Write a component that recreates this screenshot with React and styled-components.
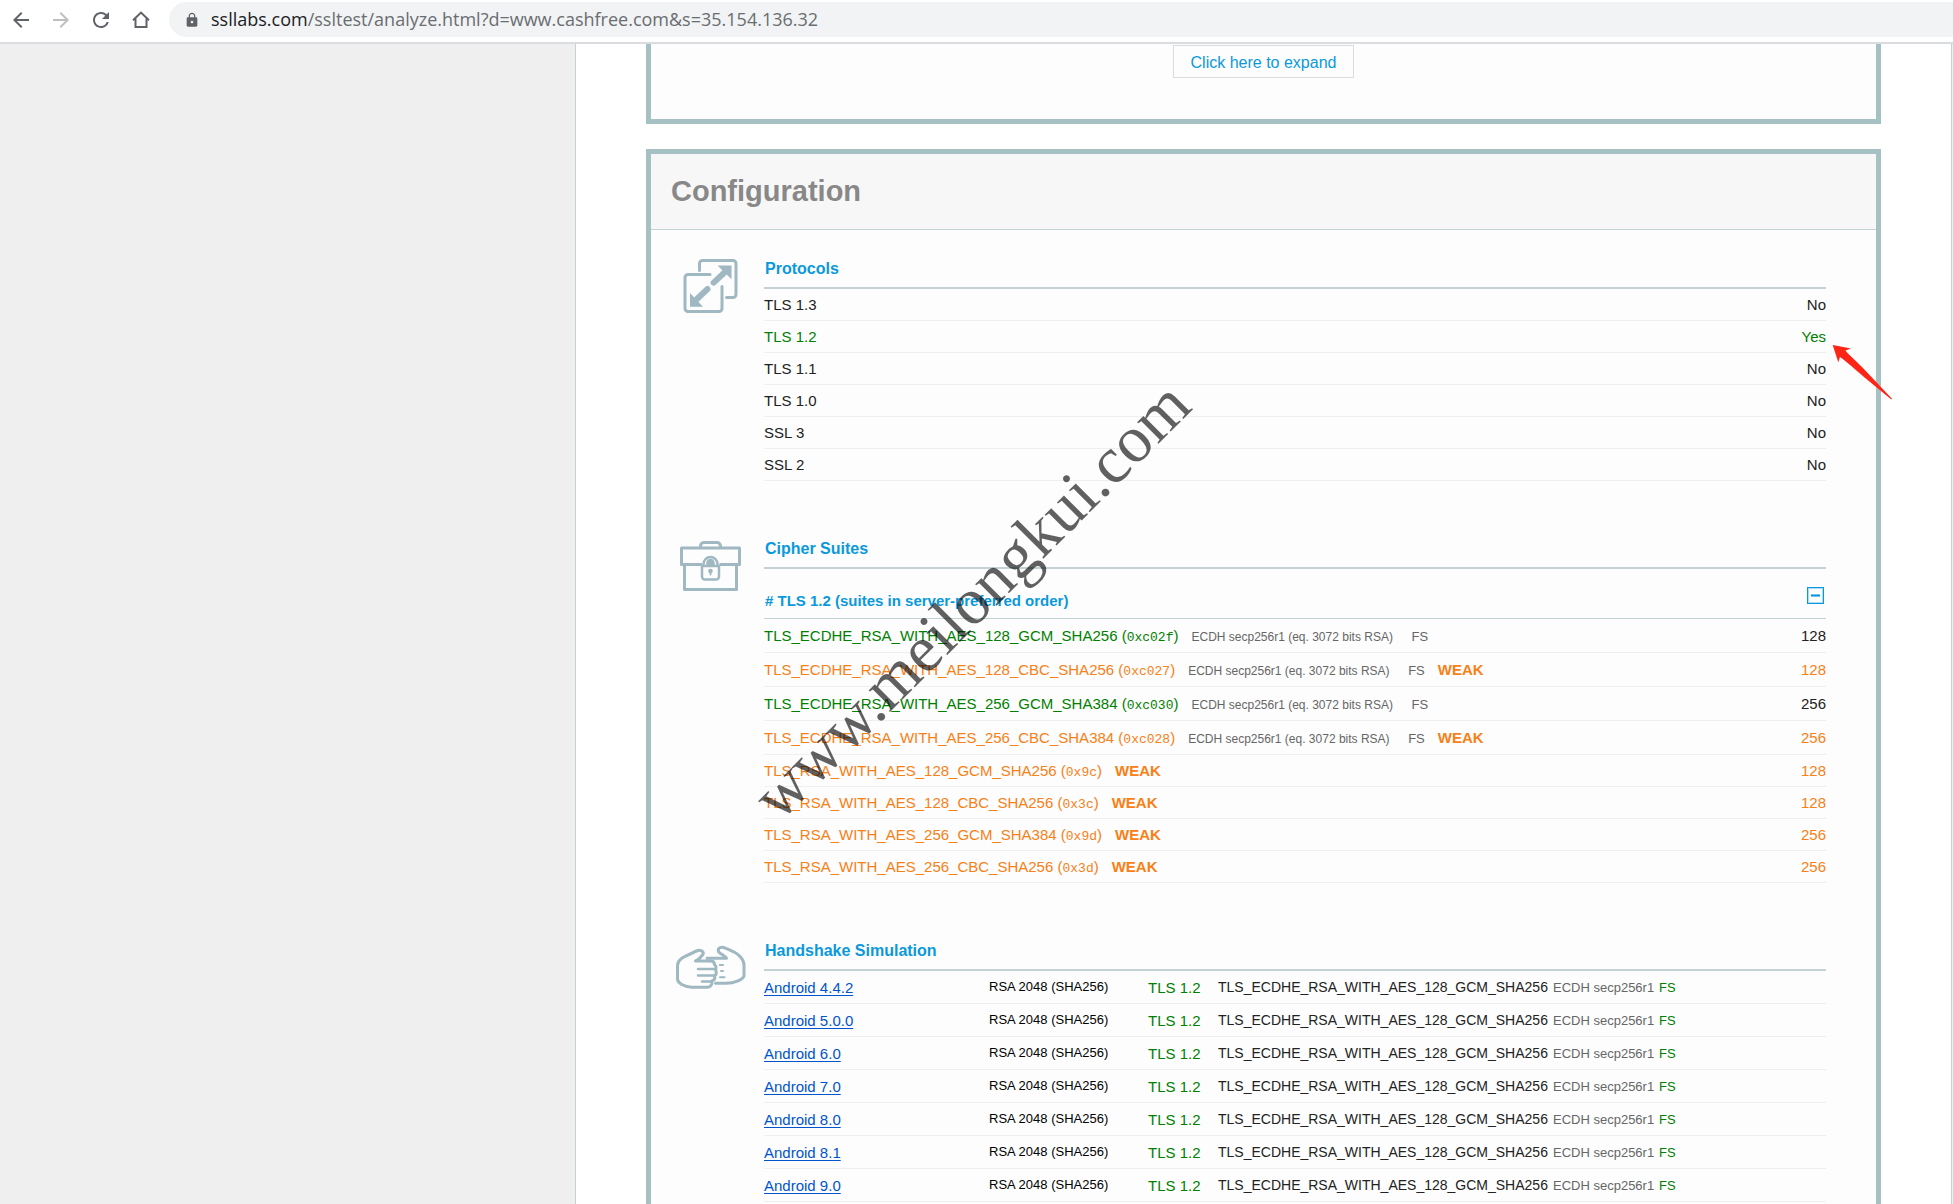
import styled, { createGlobalStyle } from "styled-components";
import { MdArrowBack, MdArrowForward, MdRefresh, MdLock } from "react-icons/md";

const GlobalStyle = createGlobalStyle`
    * {
        box-sizing : border-box;
    }
    body {
        margin : 0;
        background : #efefef;
        color : #222222;
        font-family : "Liberation Sans", Arial, sans-serif;
        font-size : 15px;
    }
`
const StyledPage = styled.div`
    position : relative;
    display : flex;
    flex-direction : column;
    height : 100vh;
    overflow : hidden;
`
const StyledToolbar = styled.header`
    display : flex;
    flex-shrink : 0;
    align-items : flex-start;
    height : 44px;
    padding : 2px 0 0 9px;
    gap : 16px;
    background : white;
    border-bottom : 2px solid #dadce0;
`
const StyledNavButton = styled.button`
    display : flex;
    align-items : center;
    justify-content : center;
    width : 24px;
    height : 35px;
    padding : 0;
    border : none;
    background : none;
    color : ${(props) => (props.disabled ? "#bdbfc1" : "#5f6368")};
`
const StyledAddress = styled.div`
    display : flex;
    flex : 1;
    align-items : center;
    gap : 11px;
    height : 35px;
    padding-left : 15px;
    border-radius : 18px 0 0 18px;
    background : #f1f3f4;
    color : #5f6368;
    font-family : "Open Sans", "Noto Sans", sans-serif;
    font-size : 18px;
`
const StyledUrl = styled.span`
    padding-bottom : 2px;
    color : #6a6d71;
    white-space : nowrap;
`
const StyledHost = styled.span`
    color : #202124;
`
const StyledBody = styled.div`
    display : flex;
    flex : 1;
    min-height : 0;
    padding : 0 1px 0 575px;
`
const StyledMain = styled.main`
    flex : 1;
    padding : 0 70px;
    background : white;
    border : solid #c1d3d6;
    border-width : 0 1px;
`
const StyledBox = styled.section`
    margin-bottom : 25px;
    padding-bottom : ${(props) => props.$bottom};
    background : #fdfdfd;
    border : 5px solid #a6c1c4;
    border-top-width : ${(props) => (props.$cut ? 0 : "5px")};
`
const StyledExpand = styled.button`
    display : block;
    width : 181px;
    height : 33px;
    margin : 0 auto;
    padding : 2px 0 0;
    background : #fdfdfd;
    border : 1px solid #d9dcdd;
    color : #0a99dc;
    font-family : inherit;
    font-size : 16px;
`
const StyledExpandRow = styled.div`
    padding-top : 1px;
`
const StyledBoxTitle = styled.h2`
    margin : 0;
    padding-left : 20px;
    background : #f7f7f7;
    border-bottom : 1px solid #c3d3d5;
    color : #888888;
    font-size : 29px;
    line-height : 75px;
`
const StyledReport = styled.div`
    display : flex;
    flex-direction : column;
    gap : 50px;
    padding : 21px 50px 0 25px;
`
const StyledReportSection = styled.div`
    display : grid;
    grid-template-columns : 70px 1fr;
    column-gap : 18px;
    align-items : start;
`
const StyledHeading = styled.h3`
    margin : 0;
    padding-left : 1px;
    border-bottom : 2px solid #c3d3d5;
    color : #0a99dc;
    font-size : 16px;
    line-height : 36px;
`
const StyledSubHeading = styled.div`
    display : flex;
    align-items : center;
    justify-content : space-between;
    height : 50px;
    padding : 13px 2px 0 1px;
    border-bottom : 1px solid #c3d3d5;
    color : #0a99dc;
    font-size : 15px;
    font-weight : bold;
`
const StyledCollapse = styled.button`
    display : flex;
    margin-bottom : 9px;
    padding : 0;
    border : none;
    background : none;
`
const StyledTable = styled.table`
    width : 100%;
    table-layout : fixed;
    border-spacing : 0;
`
const tones = { good: "#008000", weak: "#f88017", plain: "#222222", key: "#000000" }
const StyledCell = styled.td`
    width : ${(props) => props.$width || "auto"};
    height : ${(props) => props.$height || "32px"};
    padding : ${(props) => (props.$raised ? "0 0 2px" : 0)};
    border-bottom : 1px solid #efefef;
    color : ${(props) => tones[props.$tone || "plain"]};
    font-size : ${(props) => props.$size || "15px"};
    text-align : ${(props) => props.$align || "left"};
    white-space : nowrap;
`
const StyledCode = styled.code`
    font-family : "Liberation Mono", monospace;
    font-size : 13px;
`
const StyledKex = styled.span`
    display : inline-block;
    width : ${(props) => props.$width};
    margin-left : ${(props) => props.$gap || 0};
    color : #666666;
    font-size : ${(props) => props.$size};
`
const StyledSecrecy = styled.span`
    display : inline-block;
    color : ${(props) => (props.$good ? "#008000" : "#666666")};
    font-size : 13px;
`
const StyledWeak = styled.strong`
    margin-left : 13px;
`
const StyledLink = styled.a`
    color : #0055cc;
    text-underline-offset : 2px;
`
const StyledWatermark = styled.div`
    position : absolute;
    left : 971px;
    top : 600px;
    transform : translate(-50%, -50%) rotate(-45deg);
    color : rgba(0, 0, 0, 0.62);
    font-family : "Liberation Serif", serif;
    font-size : 66px;
    line-height : 1;
    white-space : nowrap;
    pointer-events : none;
`
const StyledArrow = styled.svg`
    position : absolute;
    left : 1832px;
    top : 344px;
    pointer-events : none;
`

const protocols = [
    ["TLS 1.3", "No"],
    ["TLS 1.2", "Yes"],
    ["TLS 1.1", "No"],
    ["TLS 1.0", "No"],
    ["SSL 3", "No"],
    ["SSL 2", "No"],
]

const suites = [
    { name: "TLS_ECDHE_RSA_WITH_AES_128_GCM_SHA256", code: "0xc02f", ecdh: true, bits: 128 },
    { name: "TLS_ECDHE_RSA_WITH_AES_128_CBC_SHA256", code: "0xc027", ecdh: true, weak: true, bits: 128 },
    { name: "TLS_ECDHE_RSA_WITH_AES_256_GCM_SHA384", code: "0xc030", ecdh: true, bits: 256 },
    { name: "TLS_ECDHE_RSA_WITH_AES_256_CBC_SHA384", code: "0xc028", ecdh: true, weak: true, bits: 256 },
    { name: "TLS_RSA_WITH_AES_128_GCM_SHA256", code: "0x9c", weak: true, bits: 128 },
    { name: "TLS_RSA_WITH_AES_128_CBC_SHA256", code: "0x3c", weak: true, bits: 128 },
    { name: "TLS_RSA_WITH_AES_256_GCM_SHA384", code: "0x9d", weak: true, bits: 256 },
    { name: "TLS_RSA_WITH_AES_256_CBC_SHA256", code: "0x3d", weak: true, bits: 256 },
]

const clients = [
    "Android 4.4.2",
    "Android 5.0.0",
    "Android 6.0",
    "Android 7.0",
    "Android 8.0",
    "Android 8.1",
    "Android 9.0",
]

function HomeIcon() {
    return (
        <svg width="24" height="24" viewBox="0 0 24 24" fill="none" stroke="currentColor" strokeWidth="2">
            <path d="M4 12.2 12 4.6l8 7.6M6.5 10.5V19h11v-8.500" />
        </svg>
    )
}

function ProtocolsIcon() {
    return (
        <svg width="70" height="70" viewBox="0 0 70 70" fill="none" stroke="#9fb8c1" strokeWidth="3" strokeLinecap="round">
            <path d="M23.500 19.500V12.500a3 3 0 0 1 3-3H57a3 3 0 0 1 3 3V43.500a3 3 0 0 1-3 3H50.500" />
            <path d="M34 23.500H12a3 3 0 0 0-3 3V57.500a3 3 0 0 0 3 3H43a3 3 0 0 0 3-3V35.500" />
            <path d="M37.700 31.600 48 22M31.500 38 21 48" strokeWidth="6" />
            <path d="M41.500 14.500H55.500V28.300ZM14 42V55.700H27Z" fill="#9fb8c1" stroke="none" />
        </svg>
    )
}

function CipherIcon() {
    return (
        <svg width="70" height="70" viewBox="0 0 70 70" fill="none" stroke="#9fb8c1" strokeWidth="3" strokeLinejoin="round">
            <path d="M24.500 16V15a3.500 3.500 0 0 1 3.500-3.500H41a3.500 3.500 0 0 1 3.500 3.500V16" />
            <path d="M26 33.500H5.500V17H63.500V33.500H43.500M8.500 34V58.500H60.500V34" />
            <path d="M27.500 34.500V33a7 7 0 0 1 14 0V34.500" strokeWidth="2.500" />
            <path d="M31 35V32a3.500 3.500 0 0 1 7 0V35Z" fill="#9fb8c1" strokeWidth="1.500" />
            <path d="M26 35H43V45.500a3 3 0 0 1-3 3H29a3 3 0 0 1-3-3Z" strokeWidth="2.500" />
            <circle cx="34.500" cy="40" r="2.300" fill="#9fb8c1" stroke="none" />
            <path d="M34.500 40V43.500" strokeWidth="2" strokeLinecap="round" />
        </svg>
    )
}

function HandshakeIcon() {
    return (
        <svg width="70" height="70" viewBox="0 0 70 70" fill="none" stroke="#9fb8c1" strokeWidth="3" strokeLinecap="round" strokeLinejoin="round">
            <path d="M19.500 28H34.500c2.500 0 4 1.500 4 3.500 1.500 1 2 3.500 1 5.500 1.300 2 .8 4.500-1 6 .7 2.200-.3 4.200-2.500 5 .3 3.500-1.500 6-4.500 6.300H16C8 54 1.500 50 1.500 46V33c0-4 3-7.500 8-9.800C14 21 18 19 22 17.500c4-.8 6.500 2 4.500 4.500-2 2.500-5 5.200-7 6Z" />
            <path d="M22 36H38.500M22 42.500H38M26 48.500H35.500" strokeWidth="2.500" />
            <path d="M31 25.300H50.500c-1.500-2.500-5-3.800-7.500-6-2-3 .5-6 4.500-4.800C54 17 61 19.500 64 23.500c2.500 2.500 4 5 4 8.500V43c-1.500 4-10 7.300-18 7.300H39.500" />
            <path d="M43.800 32H47M45 38H47M44 44.200H48.500" strokeWidth="2" />
        </svg>
    )
}

function MinusIcon() {
    return (
        <svg width="17" height="17" viewBox="0 0 17 17">
            <rect x="0.500" y="0.500" width="16" height="16" fill="#ffffff" stroke="#0a99dc" />
            <rect x="1.500" y="1.500" width="14" height="14" fill="none" stroke="#a9dcf3" />
            <rect x="4" y="7" width="9" height="3" fill="#6cc2ea" />
            <rect x="4" y="8" width="9" height="1" fill="#0a99dc" />
        </svg>
    )
}

function Toolbar() {
    return (
        <StyledToolbar>
            <StyledNavButton aria-label="Back"><MdArrowBack size={24} /></StyledNavButton>
            <StyledNavButton aria-label="Forward" disabled><MdArrowForward size={24} /></StyledNavButton>
            <StyledNavButton aria-label="Reload"><MdRefresh size={24} /></StyledNavButton>
            <StyledNavButton aria-label="Home"><HomeIcon /></StyledNavButton>
            <StyledAddress>
                <MdLock size={16} />
                <StyledUrl>
                    <StyledHost>ssllabs.com</StyledHost>/ssltest/analyze.html?d=www.cashfree.com&amp;s=35.154.136.32
                </StyledUrl>
            </StyledAddress>
        </StyledToolbar>
    )
}

function Protocols() {
    return (
        <StyledReportSection>
            <ProtocolsIcon />
            <div>
                <StyledHeading>Protocols</StyledHeading>
                <StyledTable>
                    <tbody>
                        {protocols.map(([name, state]) => (
                            <tr key={name}>
                                <StyledCell $tone={state === "Yes" ? "good" : "plain"}>{name}</StyledCell>
                                <StyledCell $tone={state === "Yes" ? "good" : "plain"} $align="right">{state}</StyledCell>
                            </tr>
                        ))}
                    </tbody>
                </StyledTable>
            </div>
        </StyledReportSection>
    )
}

function CipherSuites() {
    return (
        <StyledReportSection>
            <CipherIcon />
            <div>
                <StyledHeading>Cipher Suites</StyledHeading>
                <StyledSubHeading>
                    # TLS 1.2 (suites in server-preferred order)
                    <StyledCollapse aria-label="Collapse"><MinusIcon /></StyledCollapse>
                </StyledSubHeading>
                <StyledTable>
                    <tbody>
                        {suites.map((suite) => (
                            <tr key={suite.code}>
                                <StyledCell $height={suite.ecdh ? "34px" : "32px"} $tone={suite.weak ? "weak" : "good"}>
                                    {suite.name} (<StyledCode>{suite.code}</StyledCode>)
                                    {suite.ecdh && <StyledKex $width="220px" $gap="13px" $size="12px">ECDH secp256r1 (eq. 3072 bits RSA)</StyledKex>}
                                    {suite.ecdh && <StyledSecrecy>FS</StyledSecrecy>}
                                    {suite.weak && <StyledWeak>WEAK</StyledWeak>}
                                </StyledCell>
                                <StyledCell $width="60px" $align="right" $tone={suite.weak ? "weak" : "plain"}>{suite.bits}</StyledCell>
                            </tr>
                        ))}
                    </tbody>
                </StyledTable>
            </div>
        </StyledReportSection>
    )
}

function Handshakes() {
    return (
        <StyledReportSection>
            <HandshakeIcon />
            <div>
                <StyledHeading>Handshake Simulation</StyledHeading>
                <StyledTable>
                    <tbody>
                        {clients.map((client) => (
                            <tr key={client}>
                                <StyledCell $width="225px" $height="33px"><StyledLink href="#client">{client}</StyledLink></StyledCell>
                                <StyledCell $width="159px" $size="13px" $tone="key" $raised>RSA 2048 (SHA256)</StyledCell>
                                <StyledCell $width="70px" $tone="good">TLS 1.2</StyledCell>
                                <StyledCell $width="335px" $size="14px">TLS_ECDHE_RSA_WITH_AES_128_GCM_SHA256</StyledCell>
                                <StyledCell $raised>
                                    <StyledKex $width="106px" $size="13px">ECDH secp256r1</StyledKex>
                                    <StyledSecrecy $good>FS</StyledSecrecy>
                                </StyledCell>
                            </tr>
                        ))}
                    </tbody>
                </StyledTable>
            </div>
        </StyledReportSection>
    )
}

export default function App() {
    return (
        <StyledPage>
            <GlobalStyle />
            <Toolbar />
            <StyledBody>
                <StyledMain>
                    <StyledBox $cut $bottom="41px">
                        <StyledExpandRow>
                            <StyledExpand>Click here to expand</StyledExpand>
                        </StyledExpandRow>
                    </StyledBox>
                    <StyledBox $bottom="50px">
                        <StyledBoxTitle>Configuration</StyledBoxTitle>
                        <StyledReport>
                            <Protocols />
                            <CipherSuites />
                            <Handshakes />
                        </StyledReport>
                    </StyledBox>
                </StyledMain>
            </StyledBody>
            <StyledWatermark>www.meilongkui.com</StyledWatermark>
            <StyledArrow width="62" height="58" viewBox="0 0 62 58">
                <path d="M.7 1 19 4.600 13.500 6.500C16 10 22 15 30 23L60 54.800 59.300 55.500 32 33C24 26 15 18 8 13L6.300 18.300Z" fill="#ff2415" />
            </StyledArrow>
        </StyledPage>
    )
}
